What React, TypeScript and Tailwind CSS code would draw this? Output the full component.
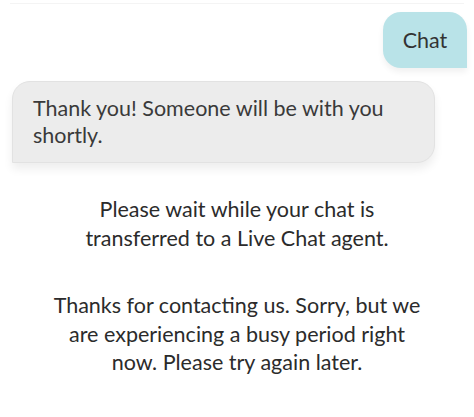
import React from "react";

export default function App() {
  return (
    <div
      className="w-[474px] h-[417px] bg-white overflow-hidden text-[#2b2b2b]"
      style={{ fontFamily: "Lato, 'Noto Sans', sans-serif" }}
    >
      <div className="mx-[10px] h-[4px] border-b border-[#f4f4f4]" />
      <div className="flex justify-end pr-[7px] pt-[8px]">
        <div className="bg-[#b9e3e8] rounded-t-[18px] rounded-bl-[18px] w-[84px] h-[56px] flex items-center justify-center text-[21.5px] text-[#333] shadow-[0_4px_6px_rgba(0,0,0,0.06)]">
          Chat
        </div>
      </div>
      <div className="pl-[12px] pt-[13px]">
        <div className="w-[423px] bg-[#ececec] border border-[#e2e2e2] rounded-t-[18px] rounded-br-[18px] pl-[20px] pr-[16px] pt-[13px] pb-[13px] text-[21.5px] leading-[27px] text-[#3a3a3a] shadow-[0_6px_10px_rgba(0,0,0,0.07)]">
          Thank you! Someone will be with you shortly.
        </div>
      </div>
      <div className="mt-[32px] text-center text-[21.5px] leading-[29px]">
        <p>
          Please wait while your chat is
          <br />
          transferred to a Live Chat agent.
        </p>
        <p className="mt-[38px] leading-[28.5px]">
          Thanks for contacting us. Sorry, but we
          <br />
          are experiencing a busy period right
          <br />
          now. Please try again later.
        </p>
      </div>
    </div>
  );
}
